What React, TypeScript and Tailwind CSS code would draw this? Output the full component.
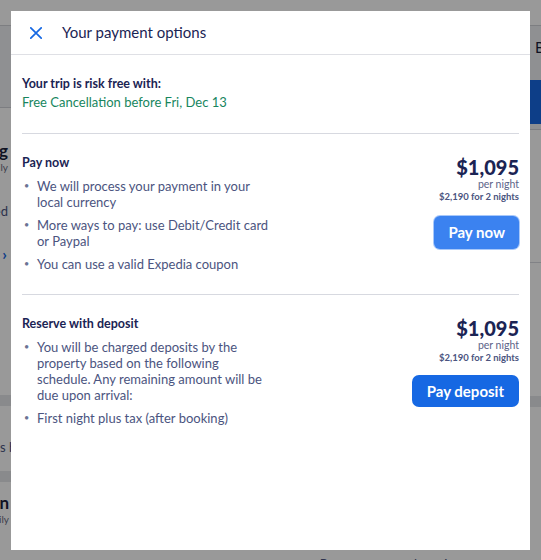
import React from "react";

interface PaymentOptionProps {
  title: string;
  bullets: string[];
  price: string;
  total: string;
  action: string;
  focused?: boolean;
}

const CloseIcon = () => (
  <svg width="12" height="12" viewBox="0 0 12 12" fill="none">
    <path d="M0.8 0.8L11.2 11.2M11.2 0.8L0.8 11.2" stroke="#1668e3" strokeWidth="1.7" strokeLinecap="round" />
  </svg>
);

const PaymentOption: React.FC<PaymentOptionProps> = ({ title, bullets, price, total, action, focused }) => {
  return (
    <section className="flex justify-between border-t border-[#d7d9e0] pt-[21px] pb-[22px]">
      <div className="w-[250px]">
        <h3 className="text-[12.5px] leading-[16px] font-bold text-[#1b2454]">{title}</h3>
        <ul className="mt-[7px] flex flex-col gap-[7px]">
          {bullets.map((b) => (
            <li key={b} className="flex text-[13px] leading-[16px] text-[#4b5480]">
              <span className="w-[15px] shrink-0 pl-[2px] text-[9px] text-[#6b7394]">•</span>
              <span>{b}</span>
            </li>
          ))}
        </ul>
      </div>
      <div className="flex flex-col items-end pt-px">
        <span className="text-[20px] leading-[22px] font-black text-[#1b2454]">{price}</span>
        <span className="text-[10.5px] leading-[12px] text-[#5c6488]">per night</span>
        <span className="text-[9.5px] leading-[14px] font-bold text-[#4b5480]">{total}</span>
        {focused ? (
          <button className="mt-[12px] h-[33px] rounded-[6px] bg-[#3b82f0] px-[14px] text-[15px] font-bold text-white ring-1 ring-[#a8c8fa]">
            {action}
          </button>
        ) : (
          <button className="mt-[10px] h-[32px] rounded-[7px] bg-[#1668e3] px-[15px] text-[15px] font-bold text-white">
            {action}
          </button>
        )}
      </div>
    </section>
  );
};

// the booking page that sits under the dim layer; only its edges show
const BackgroundPage = () => (
  <div className="flex h-full w-full flex-col bg-white text-[#191e3b]">
    <div className="h-[26px] border-b border-[#d0d2d8]" />
    <div className="flex flex-1">
      <div className="flex w-[11px] flex-col overflow-hidden">
        <div className="h-[82px] border-b border-[#cfd1d7] bg-[#eef0f3]" />
        <div className="flex h-[287px] flex-col items-end whitespace-nowrap pr-[3px]">
          <span className="mt-[33px] text-[17px] leading-[20px] font-bold">Parking</span>
          <span className="text-[10px] leading-[12px] text-[#676a80]">Daily</span>
          <span className="mt-[30px] text-[13px] leading-[16px] text-[#4b5480]">Included</span>
          <span className="mt-[26px] pr-px text-[16px] leading-[18px] font-bold text-[#1668e3]">›</span>
        </div>
        <div className="h-[11px] bg-[#e4e6ea]" />
        <div className="h-[65px] whitespace-nowrap pt-[33px] text-[13px] leading-[16px] text-[#4b5480]">s before</div>
        <div className="h-[11px] bg-[#e4e6ea]" />
        <div className="flex flex-col items-end whitespace-nowrap pr-[2px]">
          <span className="mt-[11px] text-[17px] leading-[20px] font-bold">Kitchen</span>
          <span className="text-[10px] leading-[12px] text-[#676a80]">Daily</span>
        </div>
      </div>
      <div className="flex flex-1 flex-col">
        <div className="flex-1" />
        <div className="h-[9px] overflow-hidden whitespace-nowrap pt-[5px] pl-[298px] text-[13px] leading-[16px] text-[#4b5480]">
          • Pay now or pay deposit
        </div>
      </div>
      <div className="flex w-[11px] flex-col overflow-hidden">
        <div className="h-[104px] border-b border-[#cfd1d7] bg-[#eef0f3]">
          <div className="pt-[12px] pl-[5px] text-[15px] leading-[18px] text-[#191e3b]">B</div>
          <div className="mt-[24px] h-[44px] bg-[#1668e3]" />
        </div>
        <div className="h-[133px] border-b border-[#d7d9e0]" />
        <div className="h-[133px]" />
        <div className="h-[11px] bg-[#e4e6ea]" />
      </div>
    </div>
  </div>
);

export default function App() {
  return (
    <div className="relative h-[560px] w-[541px] overflow-hidden font-['Lato',sans-serif]">
      <BackgroundPage />
      <div className="absolute inset-0 bg-black/40" />
      <div className="absolute left-[11px] top-[11px] flex h-[539px] w-[519px] flex-col bg-white">
        <header className="flex h-[44px] items-center gap-[20px] border-b border-[#dfe0e5] pl-[19px]">
          <CloseIcon />
          <h2 className="text-[15px] text-[#1b2454]">Your payment options</h2>
        </header>
        <div className="px-[11px]">
          <div className="pt-[20px] pb-[22px]">
            <p className="text-[12.5px] leading-[18px] font-bold text-[#1b2454]">Your trip is risk free with:</p>
            <p className="text-[13px] leading-[18px] text-[#17865e]">Free Cancellation before Fri, Dec 13</p>
          </div>
          <PaymentOption
            title="Pay now"
            bullets={[
              "We will process your payment in your local currency",
              "More ways to pay: use Debit/Credit card or Paypal",
              "You can use a valid Expedia coupon",
            ]}
            price="$1,095"
            total="$2,190 for 2 nights"
            action="Pay now"
            focused
          />
          <PaymentOption
            title="Reserve with deposit"
            bullets={[
              "You will be charged deposits by the property based on the following schedule. Any remaining amount will be due upon arrival:",
              "First night plus tax (after booking)",
            ]}
            price="$1,095"
            total="$2,190 for 2 nights"
            action="Pay deposit"
          />
        </div>
      </div>
    </div>
  );
}
